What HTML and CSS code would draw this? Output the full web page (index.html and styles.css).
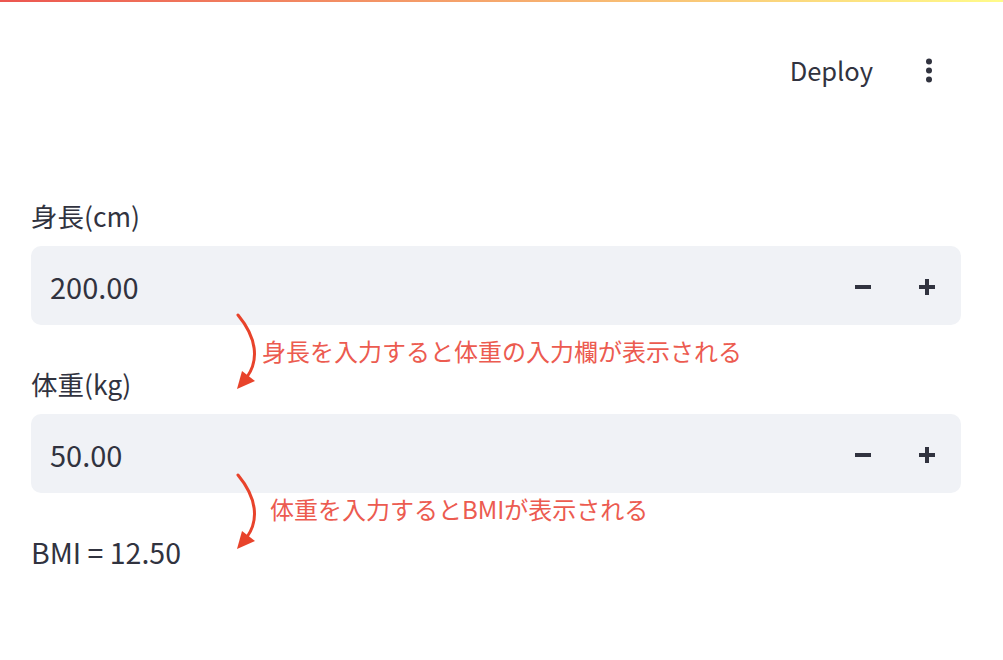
FILE: index.html
```html
<!DOCTYPE html>
<html lang="ja">
<head>
<meta charset="utf-8">
<title>BMI</title>
<link rel="stylesheet" href="styles.css">
</head>
<body>
<div class="page">
  <div class="decoration"></div>
  <header class="header">
    <span class="deploy">Deploy</span>
    <span class="menu" aria-label="menu">
      <svg width="8" height="26" viewBox="0 0 8 26"><circle cx="4" cy="3.5" r="3" fill="#31333f"/><circle cx="4" cy="12.5" r="3" fill="#31333f"/><circle cx="4" cy="21.5" r="3" fill="#31333f"/></svg>
    </span>
  </header>
  <main class="main">
    <label class="label">身長(cm)</label>
    <div class="number-input">
      <span class="value">200.00</span>
      <div class="steppers">
        <span class="step"><span class="minus"></span></span>
        <span class="step"><span class="plus"></span></span>
      </div>
    </div>
    <label class="label label-second">体重(kg)</label>
    <div class="number-input">
      <span class="value">50.00</span>
      <div class="steppers">
        <span class="step"><span class="minus"></span></span>
        <span class="step"><span class="plus"></span></span>
      </div>
    </div>
    <p class="result">BMI = 12.50</p>
  </main>

  <svg class="arrows" width="1003" height="660" viewBox="0 0 1003 660">
    <g fill="none" stroke="#e8432b" stroke-width="3" stroke-linecap="round">
      <path d="M238 315 C 257 338, 259 360, 247 377"/>
      <path d="M238 475 C 257 498, 259 520, 247 537"/>
    </g>
    <g fill="#e8432b">
      <polygon points="237,389 242,371 255,381"/>
      <polygon points="237,549 242,531 255,541"/>
    </g>
  </svg>
  <div class="note note-one">身長を入力すると体重の入力欄が表示される</div>
  <div class="note note-two">体重を入力するとBMIが表示される</div>
</div>
</body>
</html>
```

FILE: styles.css
```css
html, body {
  margin: 0;
  padding: 0;
  background: #ffffff;
}

body {
  font-family: "Noto Sans CJK JP", "Noto Sans", sans-serif;
  color: #31333f;
}

.page {
  position: relative;
  width: 1003px;
  height: 660px;
  overflow: hidden;
}

.decoration {
  height: 2px;
  background: linear-gradient(90deg, #ec5650, #fffb8a);
}

.header {
  height: 138px;
  display: flex;
  align-items: center;
  justify-content: flex-end;
  gap: 36px;
  padding-right: 54px;
  box-sizing: border-box;
}

.deploy {
  font-size: 25.5px;
  line-height: 40px;
  color: #31333f;
  margin-bottom: 3px;
}

.menu {
  width: 40px;
  height: 40px;
  display: flex;
  align-items: center;
  justify-content: center;
}

.menu svg {
  display: block;
}

.main {
  padding: 56px 42px 0 31px;
  display: flex;
  flex-direction: column;
}

.label {
  font-size: 26.5px;
  line-height: 40px;
  margin-bottom: 10px;
  color: #31333f;
}

.label-second {
  margin-top: 39px;
}

.number-input {
  height: 79px;
  background: #f0f2f6;
  border-radius: 10px;
  display: flex;
  align-items: center;
  justify-content: space-between;
  padding-left: 19px;
  padding-right: 2px;
  box-sizing: border-box;
}

.value {
  font-size: 29px;
  line-height: 40px;
  color: #31333f;
}

.steppers {
  display: flex;
  height: 100%;
}

.step {
  width: 64px;
  height: 100%;
  display: flex;
  align-items: center;
  justify-content: center;
  position: relative;
}

.minus {
  width: 16px;
  height: 4px;
  background: #31333f;
  margin-top: 2px;
}

.plus {
  width: 16px;
  height: 16px;
  margin-top: 2px;
  background:
    linear-gradient(#31333f, #31333f) center / 16px 4px no-repeat,
    linear-gradient(#31333f, #31333f) center / 4px 16px no-repeat;
}

.result {
  margin: 39px 0 0;
  font-size: 28.5px;
  line-height: 40px;
  color: #31333f;
}

.arrows {
  position: absolute;
  left: 0;
  top: 0;
  pointer-events: none;
}

.note {
  position: absolute;
  font-size: 24px;
  line-height: 30px;
  color: #ec5b50;
  white-space: nowrap;
}

.note-one {
  left: 262px;
  top: 336px;
}

.note-two {
  left: 270px;
  top: 494px;
}
```
